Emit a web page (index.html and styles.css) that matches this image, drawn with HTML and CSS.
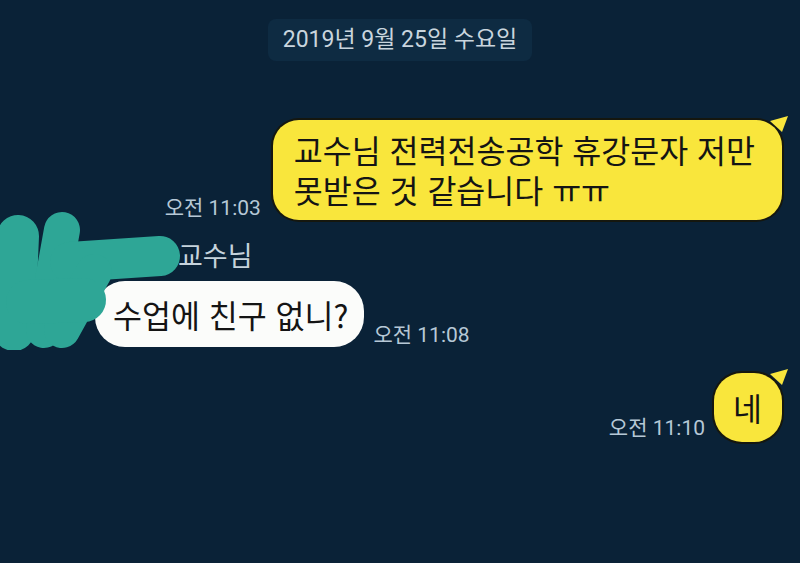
FILE: index.html
```html
<!DOCTYPE html>
<html lang="ko">
<head>
<meta charset="utf-8">
<link rel="stylesheet" href="styles.css">
</head>
<body>
<div class="screen">
  <div class="date"><span class="pill">2019년 9월 25일 수요일</span></div>

  <div class="row mine r1">
    <span class="time">오전 11:03</span>
    <div class="bubble yellow b1">교수님 전력전송공학 휴강문자 저만<br>못받은 것 같습니다 ㅠㅠ</div>
  </div>

  <div class="other">
    <div class="name">교수님</div>
    <div class="row theirs">
      <div class="bubble white">수업에 친구 없니?</div>
      <span class="time t2">오전 11:08</span>
    </div>
  </div>

  <div class="row mine r3">
    <span class="time t3">오전 11:10</span>
    <div class="bubble yellow b3">네</div>
  </div>

  <svg class="scribble" width="200" height="140" viewBox="0 210 200 140" aria-hidden="true">
    <g fill="none" stroke="#2ea696" stroke-linecap="round" stroke-linejoin="round">
      <path d="M18 236 L14 330" stroke-width="42"/>
      <path d="M62 230 L44 330" stroke-width="36"/>
      <path d="M70 262 L160 256" stroke-width="40"/>
      <path d="M94 272 L62 330" stroke-width="36"/>
      <path d="M28 302 L84 300" stroke-width="44"/>
    </g>
  </svg>
</div>
</body>
</html>
```
FILE: styles.css
```css
html, body {
  margin: 0;
  padding: 0;
  background: #0a2237;
}

.screen {
  position: relative;
  width: 800px;
  height: 563px;
  overflow: hidden;
  background: #0a2237;
  display: flex;
  flex-direction: column;
  font-family: Roboto, "Noto Sans CJK KR", sans-serif;
}

.date {
  display: flex;
  justify-content: center;
  padding-top: 19px;
}

.pill {
  background: #0e2b42;
  color: #c9d5de;
  font-size: 23px;
  height: 42px;
  line-height: 42px;
  padding: 0 15px;
  border-radius: 8px;
}

.row {
  display: flex;
  align-items: flex-end;
}

.mine {
  justify-content: flex-end;
  gap: 9px;
  padding-right: 18px;
}

.r1 {
  margin-top: 59px;
  gap: 12px;
}

.r3 {
  margin-top: 26px;
}

.time {
  font-size: 21px;
  line-height: 22px;
  color: #b6c8d6;
  margin-bottom: 1px;
  white-space: nowrap;
}

.t3 {
  margin-bottom: 3px;
}

.bubble {
  position: relative;
  color: #141414;
  font-family: "Noto Sans CJK KR", sans-serif;
  font-size: 31.5px;
  line-height: 40px;
  white-space: nowrap;
}

.yellow {
  background: #f9e63c;
  box-shadow: 0 0 0 2px #15170f;
}

.yellow::after {
  content: "";
  position: absolute;
  right: -6px;
  top: -4px;
  width: 18px;
  height: 16px;
  background: #f9e63c;
  clip-path: polygon(0 5px, 18px 0, 12px 16px);
}

.b1 {
  padding: 9px 27px 11px 21px;
  border-radius: 26px;
}

.b3 {
  padding: 14px 20px 15px 19px;
  border-radius: 28px;
}

.other {
  margin-top: 19px;
  padding-left: 95px;
}

.name {
  font-size: 27px;
  line-height: 32px;
  color: #c6d3dc;
  padding-left: 83px;
  font-family: "Noto Sans CJK KR", sans-serif;
}

.theirs {
  gap: 9px;
  margin-top: 10px;
}

.white {
  background: #fbfcfa;
  padding: 13px 16px 13px 18px;
  border-radius: 30px;
}

.scribble {
  position: absolute;
  left: 0;
  top: 210px;
}
```
